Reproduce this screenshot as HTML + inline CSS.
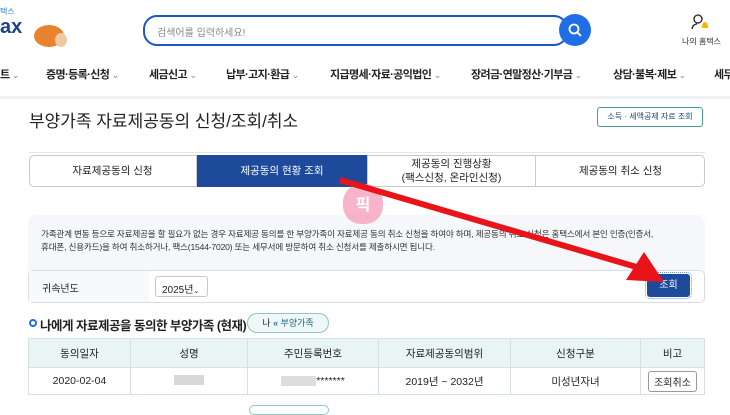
<!DOCTYPE html>
<html><head><meta charset="utf-8"><style>
*{margin:0;padding:0;box-sizing:border-box}
body{width:730px;height:410px;overflow:hidden;background:#fff;font-family:"Liberation Sans","Noto Sans CJK KR",sans-serif;color:#222;position:relative}
.a{position:absolute}
.nav span{position:absolute;top:66px;font-size:11px;font-weight:bold;color:#222;white-space:nowrap;letter-spacing:-0.6px}
.nav i{font-style:normal;color:#888;font-size:9px;font-weight:normal}
.tab{position:absolute;top:155px;height:32px;display:flex;align-items:center;justify-content:center;font-size:10.5px;text-align:center;line-height:14px;border-right:1px solid #ccc}
th,td{border:1px solid #d6e0e0;font-size:10.5px;text-align:center;font-weight:normal}
table{border-collapse:collapse;position:absolute;left:28px;top:338px;width:677px}
</style></head><body>
<div class="a" style="left:0;top:6px;font-size:8px;color:#2a7fc1">텍스</div>
<div class="a" style="left:0;top:16px;font-size:20px;font-weight:bold;color:#1d3f8f">ax</div>
<div class="a" style="left:34px;top:25px;width:30px;height:22px;border-radius:50%;background:#e8822e"></div>
<div class="a" style="left:55px;top:33px;width:12px;height:14px;border-radius:50%;background:#f0c9a0"></div>
<div class="a" style="left:143px;top:15px;width:425px;height:31px;border:2px solid #1a56c4;border-radius:14px;font-size:10px;color:#888;padding:7px 12px">검색어를 입력하세요!</div>
<div class="a" style="left:559px;top:14px;width:32px;height:32px;border-radius:50%;background:#1f6ee6"></div>
<svg class="a" style="left:567px;top:22px" width="16" height="16"><circle cx="7" cy="7" r="4.5" stroke="#fff" stroke-width="1.8" fill="none"/><line x1="10.5" y1="10.5" x2="14" y2="14" stroke="#fff" stroke-width="1.8"/></svg>
<svg class="a" style="left:690px;top:13px" width="22" height="18"><circle cx="8" cy="6" r="4" stroke="#222" stroke-width="1.3" fill="none"/><path d="M2 16 Q3 11 7 11" stroke="#222" stroke-width="1.3" fill="none"/><path d="M12 15 Q12 9 15 9 Q18 9 18 15 Z" fill="#f2b800"/></svg>
<div class="a" style="left:682px;top:36px;font-size:8px;color:#333">나의 홈택스</div>
<div class="nav">
<span style="left:0">트 <i>⌄</i></span><span style="left:46px">증명·등록·신청 <i>⌄</i></span><span style="left:149px">세금신고 <i>⌄</i></span><span style="left:226px">납부·고지·환급 <i>⌄</i></span><span style="left:330px">지급명세·자료·공익법인 <i>⌄</i></span><span style="left:471px">장려금·연말정산·기부금 <i>⌄</i></span><span style="left:613px">상담·불복·제보 <i>⌄</i></span><span style="left:714px">세무</span>
</div>
<div class="a" style="left:0;top:96px;width:730px;height:3px;background:#eef0f3"></div>
<div class="a" style="left:29px;top:107px;font-size:17px;color:#222">부양가족 자료제공동의 신청/조회/취소</div>
<div class="a" style="left:597px;top:107px;width:106px;height:20px;border:1px solid #4a9a9a;border-radius:3px;font-size:8px;color:#1d4a7a;text-align:center;line-height:18px">소득 · 세액공제 자료 조회</div>
<div class="a" style="left:29px;top:152px;width:676px;height:1px;background:#e6e6e6"></div>
<div class="a" style="left:29px;top:155px;width:676px;height:32px;border:1px solid #c8c8c8;border-radius:5px"></div>
<div class="tab" style="left:29px;width:168px">자료제공동의 신청</div>
<div class="tab" style="left:197px;width:171px;background:#1e4a9c;color:#fff">제공동의 현황 조회</div>
<div class="tab" style="left:368px;width:168px">제공동의 진행상황<br>(팩스신청, 온라인신청)</div>
<div class="tab" style="left:536px;width:169px;border:none">제공동의 취소 신청</div>
<div class="a" style="left:28px;top:215px;width:677px;height:65px;background:#f5f7fb;border-radius:8px;font-size:8.6px;color:#333;line-height:13px;padding:13px 13px;letter-spacing:-0.2px;white-space:nowrap">가족관계 변동 등으로 자료제공을 할 필요가 없는 경우 자료제공 동의를 한 부양가족이 자료제공 동의 취소 신청을 하여야 하며, 제공동의 취소 신청은 홈택스에서 본인 인증(인증서,<br>휴대폰, 신용카드)을 하여 취소하거나, 팩스(1544-7020) 또는 세무서에 방문하여 취소 신청서를 제출하시면 됩니다.</div>
<div class="a" style="left:28px;top:270px;width:677px;height:33px;border:1px solid #d8dde3;border-radius:5px;background:#fff"></div>
<div class="a" style="left:29px;top:271px;width:120px;height:31px;background:#f7f9fb"></div>
<div class="a" style="left:42px;top:280px;font-size:10px">귀속년도</div>
<div class="a" style="left:155px;top:276px;width:53px;height:21px;border:1px solid #c8c8c8;border-radius:3px;font-size:10px;padding:4px 6px;white-space:nowrap">2025년<span style="font-size:7px">⌄</span></div>
<div class="a" style="left:647px;top:274px;width:43px;height:23px;background:#1e4a9c;border-radius:3px;color:#fff;font-size:10px;text-align:center;line-height:23px;outline:1px dotted #6f8fd0;outline-offset:1px">조회</div>
<div class="a" style="left:29px;top:319px;width:8px;height:8px;border:2px solid #1f6ee6;border-radius:50%"></div>
<div class="a" style="left:40px;top:315px;font-size:12.5px;font-weight:bold;letter-spacing:-0.5px;white-space:nowrap">나에게 자료제공을 동의한 부양가족 (현재)</div>
<div class="a" style="left:247px;top:313px;width:82px;height:20px;border:1px solid #8fc7c7;border-radius:10px;background:#eef8f7;font-size:9px;text-align:center;line-height:18px">나 <b style="color:#1f6ee6">«</b> <span style="color:#1a6a8a">부양가족</span></div>
<table><tr style="height:29px;background:#e9f5f3"><th style="width:102px">동의일자</th><th style="width:117px">성명</th><th style="width:131px">주민등록번호</th><th style="width:132px">자료제공동의범위</th><th style="width:130px">신청구분</th><th>비고</th></tr>
<tr style="height:27px"><td>2020-02-04</td><td><span style="display:inline-block;width:30px;height:10px;background:#d8d8d8"></span></td><td><span style="display:inline-block;width:35px;height:10px;background:#ddd;vertical-align:middle"></span>*******</td><td>2019년 ~ 2032년</td><td>미성년자녀</td><td><span style="display:inline-block;border:1px solid #999;border-radius:3px;padding:2px 5px;font-size:10px">조회취소</span></td></tr></table>
<div class="a" style="left:249px;top:405px;width:80px;height:10px;border:1px solid #8fc7c7;border-radius:8px"></div>
<div class="a" style="left:343px;top:184px;width:40px;height:40px;border-radius:45%;background:#f7a8c0;opacity:.85;color:#fff;font-size:16px;font-weight:bold;text-align:center;line-height:44px">픽</div>
<svg class="a" style="left:0;top:0" width="730" height="410"><line x1="340" y1="180" x2="640" y2="268" stroke="#e8141a" stroke-width="6"/><polygon points="664,282 626,280 644,252" fill="#e8141a"/></svg>
</body></html>
